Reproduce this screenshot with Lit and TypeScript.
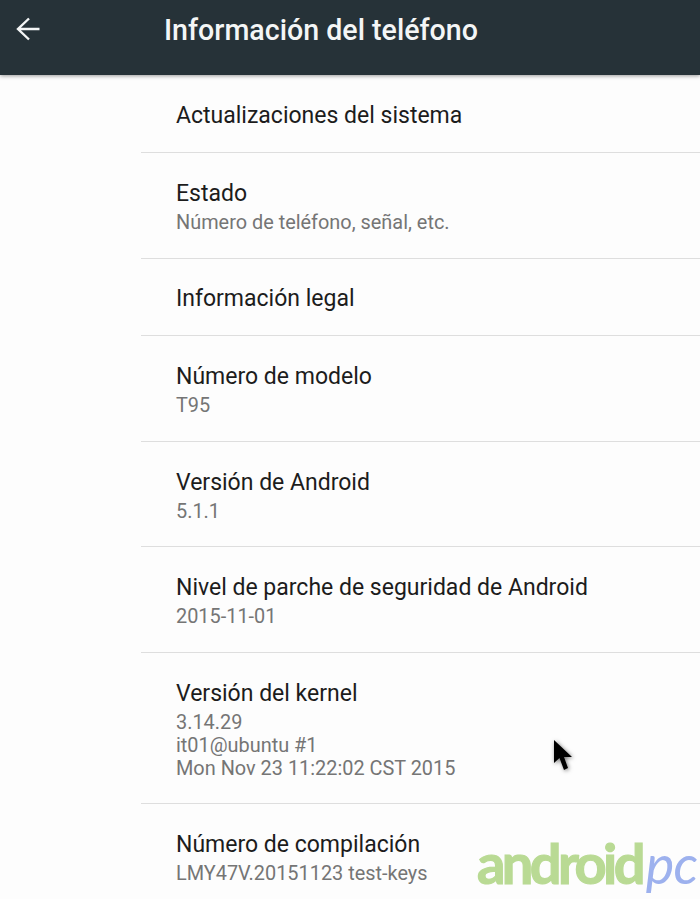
import { LitElement, html, css } from "lit";
import { customElement } from "lit/decorators.js";
import { classMap } from "lit/directives/class-map.js";

interface Row { title: string; lines: string[]; height: number; }

const ROWS: Row[] = [
  { title: "Actualizaciones del sistema", lines: [], height: 77 },
  { title: "Estado", lines: ["Número de teléfono, señal, etc."], height: 106 },
  { title: "Información legal", lines: [], height: 77 },
  { title: "Número de modelo", lines: ["T95"], height: 106 },
  { title: "Versión de Android", lines: ["5.1.1"], height: 105 },
  { title: "Nivel de parche de seguridad de Android", lines: ["2015-11-01"], height: 106 },
  { title: "Versión del kernel", lines: ["3.14.29", "it01@ubuntu #1", "Mon Nov 23 11:22:02 CST 2015"], height: 151 },
  { title: "Número de compilación", lines: ["LMY47V.20151123 test-keys"], height: 104 },
];

@customElement("app-root")
export class AppRoot extends LitElement {
  static styles = css`
    :host {
      display: block;
      position: relative;
      width: 700px;
      height: 899px;
      overflow: hidden;
      background: #fdfdfd;
      font-family: Roboto, "Liberation Sans", sans-serif;
    }
    .bar {
      height: 75px;
      background: #263238;
      display: flex;
      align-items: flex-start;
      box-shadow: 0 1px 4px rgba(0, 0, 0, 0.4);
      position: relative;
    }
    .back {
      width: 24px;
      height: 24px;
      margin: 17px 0 0 16px;
      flex: none;
    }
    .bar h1 {
      margin: 11px 0 0 124px;
      font-size: 28.6px;
      line-height: 38px;
      font-weight: 500;
      color: #f4f6f6;
      white-space: nowrap;
    }
    .list {
      padding: 1px 0 0 141px;
      display: flex;
      flex-direction: column;
    }
    .row {
      box-sizing: border-box;
      padding-left: 35px;
      padding-top: 2px;
      border-bottom: 1px solid #dedede;
      display: flex;
      flex-direction: column;
      justify-content: center;
    }
    .row.single {
      padding-top: 4px;
    }
    .row:last-child {
      border-bottom: none;
    }
    .title {
      font-size: 23px;
      line-height: 30px;
      color: #1c1c1c;
      white-space: nowrap;
    }
    .sub {
      font-size: 19.9px;
      line-height: 23px;
      color: #757575;
      white-space: nowrap;
    }
    .lines { margin-top: 2px; }
    .cursor {
      position: absolute;
      left: 551px;
      top: 739px;
      width: 24px;
      height: 34px;
      filter: drop-shadow(1px 1px 2px rgba(0, 0, 0, 0.55));
    }
    .mark {
      position: absolute;
      left: 477px;
      top: 828px;
      white-space: nowrap;
      line-height: 70px;
      font-size: 56px;
      font-family: Lato, sans-serif;
    }
    .mark .a {
      font-weight: 700;
      color: #b9da94;
      -webkit-text-stroke: 1.2px #b9da94;
      letter-spacing: -3.6px;
    }
    .mark .p {
      font-size: 54px;
      font-weight: 400;
      font-style: italic;
      color: #9db1ee;
      letter-spacing: -1px;
      margin-left: 4px;
    }
  `;

  render() {
    return html`
      <div class="bar">
        <svg class="back" viewBox="0 0 24 24" aria-hidden="true">
          <path d="M23.500 12H1.800M13 1.500 2 12 13 22.500" fill="none" stroke="#f4f6f6" stroke-width="2.400" />
        </svg>
        <h1>Información del teléfono</h1>
      </div>
      <div class="list">
        ${ROWS.map(
          (r) => html`
            <div class=${classMap({ row: true, single: r.lines.length === 0 })} style="height:${r.height}px">
              <div class="title">${r.title}</div>
              ${r.lines.length
                ? html`<div class="lines">${r.lines.map((l) => html`<div class="sub">${l}</div>`)}</div>`
                : ""}
            </div>
          `
        )}
      </div>
      <svg class="cursor" viewBox="0 0 24 34" aria-hidden="true">
        <path d="M3 1V24L8.500 19 13 31 17 29 13 18H21Z" fill="#000" />
      </svg>
      <div class="mark"><span class="a">android</span><span class="p">pc</span></div>
    `;
  }
}
